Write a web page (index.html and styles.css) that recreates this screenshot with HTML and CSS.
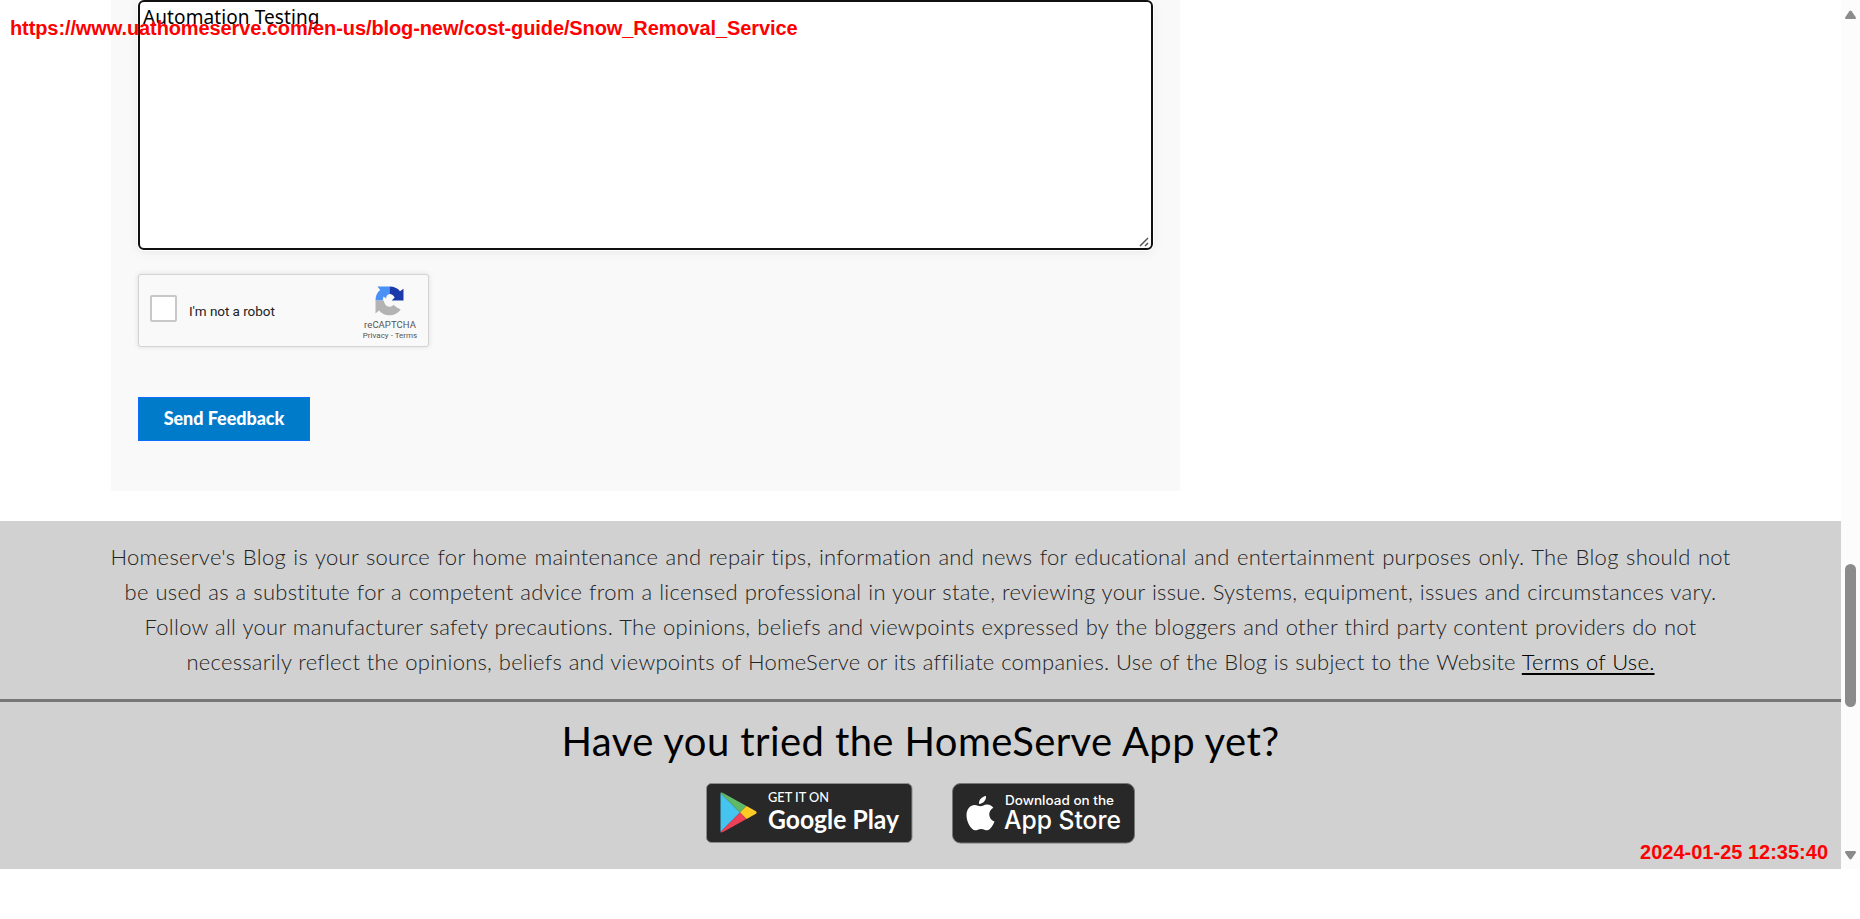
FILE: index.html
```html
<!DOCTYPE html>
<html lang="en">
<head>
<meta charset="utf-8">
<title>Snow Removal Service</title>
<link rel="stylesheet" href="styles.css">
</head>
<body>
<div class="stamp url">https://www.uathomeserve.com/en-us/blog-new/cost-guide/Snow_Removal_Service</div>
<div class="viewport">
  <div class="page">
    <main class="main">
      <section class="panel">
        <div class="field"><span class="typed">Automation Testing</span>
          <svg class="grip" width="10" height="10" viewBox="0 0 10 10"><path d="M1 9 9 1M6 9 9 6" stroke="#555" stroke-width="1.5" fill="none"/></svg>
        </div>
        <div class="captcha">
          <span class="check"></span>
          <span class="robot">I'm not a robot</span>
          <div class="brand">
            <svg width="29" height="30" viewBox="0 0 29 30">
              <path d="M.5 14.5C.5 10 2 6.500 5.200 4L2.500.5H14.500V8C11.700 8.500 11 10.500 11.300 12.500L8.500 10.500 7.700 14.500Z" fill="#4a90f5"/>
              <path d="M14.500.5C19 .5 22.500 2 25 5.200L28.500 2.800V14.500H16.800L19.700 11.500C18.500 9.200 17 8 14.500 8Z" fill="#1c3aa9"/>
              <path d="M.5 14.500H9C9 17 10 18.500 11.500 19.700 14 21.500 17.500 20.500 18.500 18.700L21.500 21.300 25.700 23.500C22.500 28 18.500 29.300 14 29.300 10 29.300 6.500 27.500 4 24.500L.5 27.500Z" fill="#b3b3b3"/>
            </svg>
            <span class="name">reCAPTCHA</span>
            <span class="terms">Privacy - Terms</span>
          </div>
        </div>
        <button class="send">Send Feedback</button>
      </section>
    </main>
    <section class="disclaimer">
      <p class="line l1">Homeserve's Blog is your source for home maintenance and repair tips, information and news for educational and entertainment purposes only. The Blog should not</p>
      <p class="line l2">be used as a substitute for a competent advice from a licensed professional in your state, reviewing your issue. Systems, equipment, issues and circumstances vary.</p>
      <p class="line l3">Follow all your manufacturer safety precautions. The opinions, beliefs and viewpoints expressed by the bloggers and other third party content providers do not</p>
      <p class="line l4">necessarily reflect the opinions, beliefs and viewpoints of HomeServe or its affiliate companies. Use of the Blog is subject to the Website <a class="tou">Terms of Use.</a></p>
    </section>
    <section class="app">
      <h2 class="title">Have you tried the HomeServe App yet?</h2>
      <div class="badges">
        <svg width="207" height="60" viewBox="0 0 207 60">
          <rect x=".5" y=".5" width="205.500" height="59" rx="5" fill="#282828" stroke="#8c8c8c"/>
          <path d="M14.500 10v39L34 29.500Z" fill="#45c4ef"/>
          <path d="M14.500 10c.8-.8 1.600-.5 2.500 0L40.500 23 34 29.500Z" fill="#60b966"/>
          <path d="M40.500 23l9 5c1.500 1 1.500 2 0 3l-9 5L34 29.500Z" fill="#fdcb23"/>
          <path d="M14.500 49c.8.8 1.600.5 2.500 0L40.500 36 34 29.500Z" fill="#ee4056"/>
          <text class="small-g" x="62" y="19" textLength="61" lengthAdjust="spacingAndGlyphs">GET IT ON</text>
          <text class="big-g" x="62" y="45.500" textLength="131" lengthAdjust="spacingAndGlyphs">Google Play</text>
        </svg>
        <svg width="184" height="61" viewBox="0 0 184 61">
          <rect x=".5" y=".5" width="182" height="59.500" rx="8" fill="#282828" stroke="#777"/>
          <path d="M34 13c.5 4-3 8-7 8-.5-4 3-7.500 7-8ZM28.500 23.300c2 0 3.500-1.800 6.500-1.800 3 0 5 1.300 6.300 3.300-6 3.500-5 11.500 1.200 13.800-1.500 4-4.500 8.700-7.300 8.700-2.200 0-3.300-1.400-6-1.400s-4 1.400-6 1.400c-4 0-8.700-8.300-8.700-15 0-6.500 4-10.300 8-10.300 2.500 0 4.500 1.300 6 1.300Z" fill="#fff"/>
          <text class="small-a" x="53" y="22" textLength="109" lengthAdjust="spacingAndGlyphs">Download on the</text>
          <text class="big-a" x="52" y="46" textLength="117" lengthAdjust="spacingAndGlyphs">App Store</text>
        </svg>
      </div>
    </section>
  </div>
  <div class="scrollbar">
    <svg width="11" height="9" viewBox="0 0 11 9"><path d="M0 7.500 4.300 1.200Q5.500 0 6.700 1.200L11 7.500Q11 9 10 9H1Q0 9 0 7.500Z" fill="#8b8b8b"/></svg>
    <span class="thumb"></span>
    <svg width="11" height="9" viewBox="0 0 11 9"><path d="M0 1.500 4.300 7.800Q5.500 9 6.700 7.800L11 1.500Q11 0 10 0H1Q0 0 0 1.500Z" fill="#8b8b8b"/></svg>
  </div>
</div>
<div class="stamp time">2024-01-25 12:35:40</div>
</body>
</html>
```

FILE: styles.css
```css
* { box-sizing: border-box; }
body { margin: 0; height: 919px; overflow: hidden; background: #fff; font-family: Lato, sans-serif; position: relative; }
.viewport { display: flex; height: 869px; }
.page { width: 1841px; display: flex; flex-direction: column; }
.main { height: 521px; padding-left: 111px; }
.panel { width: 1069px; height: 491px; background: #f9f9f9; padding: 0 27px; display: flex; flex-direction: column; align-items: flex-start; }
.field { position: relative; width: 1015px; height: 250px; border: 2px solid #101010; border-radius: 6px; background: #fff; padding: 3px 3px; box-shadow: 0 0 0 1px #fff, 0 2px 12px rgba(0,0,0,.07); }
.typed { display: block; font-family: "Noto Sans", sans-serif; font-size: 19px; line-height: 24px; color: #000; width: 178px; white-space: nowrap; letter-spacing: .1px; }
.grip { position: absolute; right: 2px; bottom: 1px; }
.captcha { width: 291px; height: 73px; margin-top: 24px; border: 1px solid #d3d3d3; border-radius: 3px; background: #f9f9f9; box-shadow: 0 0 4px 1px rgba(0,0,0,.08); display: flex; align-items: flex-start; font-family: Roboto, sans-serif; color: #222; }
.check { width: 27px; height: 27px; margin: 20px 0 0 11px; border: 2px solid #c8c8c8; border-radius: 2px; background: #fff; }
.robot { width: 176px; margin: 28px 0 0 12px; font-size: 13.500px; line-height: 17px; letter-spacing: -.05px; }
.brand { width: 58px; margin-top: 11px; margin-left: -4px; display: flex; flex-direction: column; align-items: center; white-space: nowrap; color: #555; }
.brand svg { margin-left: -1px; }
.name { font-size: 9.500px; line-height: 11px; margin-top: 3px; letter-spacing: .05px; }
.terms { font-size: 8px; line-height: 10px; margin-top: 1px; }
.send { width: 172px; height: 44px; margin-top: 50px; padding: 0 0 2px; border: 1px solid #0d6efd; background: #007bca; color: #fff; font: 900 18px Lato, sans-serif; letter-spacing: -.05px; }
.disclaimer { height: 181px; background: #d1d1d1; border-bottom: 3px solid #767676; padding-top: 18px; display: flex; flex-direction: column; align-items: center; }
.line { margin: 0; font-size: 22px; font-weight: 300; line-height: 35px; color: #222; white-space: nowrap; text-align: justify; text-align-last: justify; font-family: Lato, sans-serif; letter-spacing: .29px; }
.l1 { width: 1620px; }
.l2 { width: 1592px; }
.l3 { width: 1552px; }
.l4 { width: 1468px; letter-spacing: .23px; }
.tou { color: #000; text-decoration: underline; text-decoration-thickness: 2px; text-underline-offset: 3px; }
.app { height: 167px; background: #d1d1d1; display: flex; flex-direction: column; align-items: center; }
.title { margin: 15px 0 0; width: 718px; height: 48px; font-size: 40px; line-height: 48px; font-weight: 400; color: #000; white-space: nowrap; text-align-last: justify; letter-spacing: .4px; }
.badges { display: flex; gap: 39px; margin-top: 18px; }
.badges text { fill: #fff; }
.small-g { font: 500 13px Lato, sans-serif; }
.big-g { font: 700 26px Lato, sans-serif; }
.small-a { font: 500 12.500px Inter, sans-serif; }
.big-a { font: 500 25px Inter, sans-serif; }
.scrollbar { width: 19px; background: #fcfcfc; padding: 10px 0 9px; display: flex; flex-direction: column; align-items: center; justify-content: space-between; }
.thumb { width: 11px; height: 143px; margin-top: 401px; border-radius: 6px; background: #8b8b8b; }
.stamp { position: absolute; z-index: 2; color: #f00; font: bold 20px/24px "Liberation Sans", Arial, sans-serif; white-space: nowrap; }
.url { left: 10px; top: 16px; letter-spacing: -.1px; }
.time { right: 32px; top: 840px; }
```
